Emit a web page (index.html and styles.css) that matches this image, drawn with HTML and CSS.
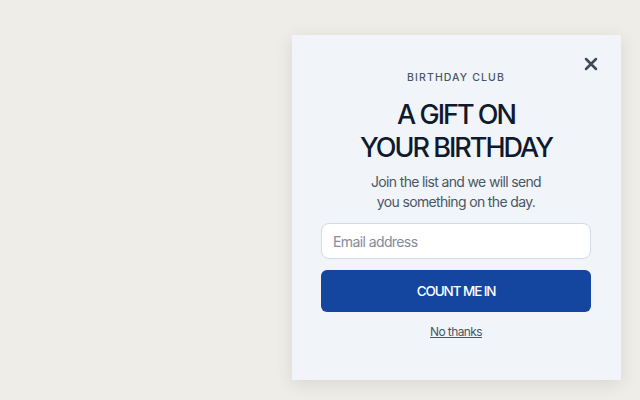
FILE: index.html
```html
<!DOCTYPE html>
<html>
<head>
<meta charset="utf-8">
<link rel="stylesheet" href="styles.css">
</head>
<body>
<div class="stage">
  <div class="modal">
    <button class="close" aria-label="Close">
      <svg width="14" height="14" viewBox="0 0 14 14"><path d="M2 2 L12 12 M12 2 L2 12" stroke="#3f4859" stroke-width="2.5" stroke-linecap="round"/></svg>
    </button>
    <div class="eyebrow">BIRTHDAY CLUB</div>
    <h1 class="title">A GIFT ON<br>YOUR BIRTHDAY</h1>
    <p class="desc">Join the list and we will send<br>you something on the day.</p>
    <input class="email" type="text" placeholder="Email address">
    <button class="cta">COUNT ME IN</button>
    <a class="skip" href="#">No thanks</a>
  </div>
</div>
</body>
</html>
```
FILE: styles.css
```css
html, body { margin: 0; padding: 0; }
body {
  background: #efede8;
  font-family: Inter, "Noto Sans", sans-serif;
  width: 640px; height: 400px; overflow: hidden;
}
.stage {
  display: flex;
  justify-content: flex-end;
  padding: 35px 19px 0 0;
}
.modal {
  position: relative;
  width: 329px;
  height: 345px;
  box-sizing: border-box;
  background: #f1f5f9;
  box-shadow: 0 4px 16px rgba(60,55,45,0.12);
  display: flex;
  flex-direction: column;
  align-items: center;
  padding: 36px 30px 0 29px;
}
.close {
  position: absolute;
  top: 22px; right: 23px;
  width: 14px; height: 14px;
  padding: 0; border: 0; background: none;
  display: flex;
}
.eyebrow {
  font-size: 10.5px;
  letter-spacing: 1.1px;
  color: #4b5566;
  font-weight: 500;
  line-height: 14px;
}
.title {
  margin: 13px 0 0;
  font-size: 27px;
  line-height: 33px;
  font-weight: 500;
  letter-spacing: -2px;
  color: #0f1a2e;
  text-align: center;
}
.desc {
  margin: 8px 0 0;
  font-size: 14px;
  line-height: 20px;
  color: #4b5566;
  text-align: center;
  letter-spacing: -0.65px;
}
.email {
  margin-top: 11px;
  width: 270px;
  height: 36px;
  box-sizing: border-box;
  border: 1px solid #d3d9e6;
  border-radius: 8px;
  background: #fff;
  padding: 0 11px;
  font-family: inherit;
  font-size: 14px;
  letter-spacing: -0.6px;
  color: #1f2937;
  outline: none;
}
.email::placeholder { color: #858b9c; }
.cta {
  margin-top: 11px;
  width: 270px;
  height: 42px;
  border: 0;
  border-radius: 6px;
  background: #1446a0;
  color: #fff;
  font-family: inherit;
  font-size: 13.5px;
  font-weight: 500;
  letter-spacing: -1.1px;
}
.skip {
  margin-top: 12px;
  font-size: 12px;
  color: #4b5566;
  text-decoration: underline;
  letter-spacing: -0.6px;
}
```
